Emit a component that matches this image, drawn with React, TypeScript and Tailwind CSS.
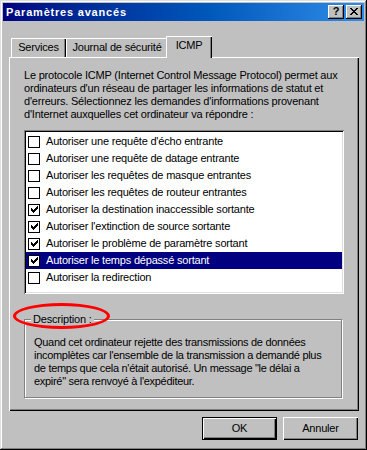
import React from "react";

const items: { label: string; checked: boolean; selected?: boolean }[] = [
  { label: "Autoriser une requête d'écho entrante", checked: false },
  { label: "Autoriser une requête de datage entrante", checked: false },
  { label: "Autoriser les requêtes de masque entrantes", checked: false },
  { label: "Autoriser les requêtes de routeur entrantes", checked: false },
  { label: "Autoriser la destination inaccessible sortante", checked: true },
  { label: "Autoriser l'extinction de source sortante", checked: true },
  { label: "Autoriser le problème de paramètre sortant", checked: true },
  { label: "Autoriser le temps dépassé sortant", checked: true, selected: true },
  { label: "Autoriser la redirection", checked: false },
];

function Check() {
  return (
    <svg width="7" height="7" viewBox="0 0 7 7" shapeRendering="crispEdges">
      <path
        d="M0 2h1v3H0z M1 3h1v3H1z M2 4h1v3H2z M3 3h1v3H3z M4 2h1v3H4z M5 1h1v3H5z M6 0h1v3H6z"
        fill="#000"
      />
    </svg>
  );
}

function CloseGlyph() {
  return (
    <svg width="8" height="7" viewBox="0 0 8 7" shapeRendering="crispEdges">
      <path
        d="M0 0h2v1H0z M6 0h2v1H6z M1 1h2v1H1z M5 1h2v1H5z M2 2h4v1H2z M3 3h2v1H3z M2 4h4v1H2z M1 5h2v1H1z M5 5h2v1H5z M0 6h2v1H0z M6 6h2v1H6z"
        fill="#000"
      />
    </svg>
  );
}

export default function App() {
  return (
    <div className="relative w-[367px] h-[450px] bg-[#c0c0c0] p-[3px] flex flex-col font-['Liberation_Sans',Arial,sans-serif] text-[11px] leading-[13px] text-black tracking-[-0.2px] shadow-[inset_-1px_-1px_#000,inset_1px_1px_#dfdfdf,inset_-2px_-2px_#808080,inset_2px_2px_#fff]">
      {/* Title bar */}
      <div className="h-[18px] flex items-center bg-linear-to-r from-[#000080] to-[#2e8de8] pl-[3px] pr-[2px]">
        <span className="flex-1 text-white font-bold text-[11px] tracking-[0.8px] whitespace-nowrap">
          Paramètres avancés
        </span>
        <div className="flex gap-[2px]">
          <div className="w-[16px] h-[14px] bg-[#c0c0c0] flex items-center justify-center shadow-[inset_-1px_-1px_#000,inset_1px_1px_#fff,inset_-2px_-2px_#808080] text-[11px] font-bold leading-[11px] tracking-normal pb-[1px]">
            ?
          </div>
          <div className="w-[16px] h-[14px] bg-[#c0c0c0] flex items-center justify-center shadow-[inset_-1px_-1px_#000,inset_1px_1px_#fff,inset_-2px_-2px_#808080] pb-[1px]">
            <CloseGlyph />
          </div>
        </div>
      </div>

      {/* Body */}
      <div className="flex-1 flex flex-col pl-[6px] pr-[5px]">
        {/* Tabs */}
        <div className="relative z-10 mt-[15px] h-[21px] flex items-end pl-[2px]">
          <div className="w-[55px] h-[19px] flex justify-center pt-[3px] bg-[#c0c0c0] whitespace-nowrap shadow-[inset_1px_1px_#fff,inset_-1px_0_#000,inset_-2px_0_#808080]">
            Services
          </div>
          <div className="w-[102px] h-[19px] flex justify-center pt-[3px] bg-[#c0c0c0] whitespace-nowrap shadow-[inset_1px_1px_#fff,inset_-1px_0_#000,inset_-2px_0_#808080]">
            Journal de sécurité
          </div>
          <div className="relative -ml-[2px] -mb-px w-[46px] h-[22px] flex justify-center pt-[3px] bg-[#c0c0c0] whitespace-nowrap shadow-[inset_1px_1px_#fff,inset_-1px_0_#000,inset_-2px_0_#808080]">
            ICMP
          </div>
        </div>

        {/* Panel */}
        <div className="h-[354px] flex flex-col pt-[12px] pl-[15px] bg-[#c0c0c0] shadow-[inset_1px_1px_#fff,inset_-1px_-1px_#000,inset_-2px_-2px_#808080]">
          <div className="whitespace-nowrap">
            <div>Le protocole ICMP (Internet Control Message Protocol) permet aux</div>
            <div>ordinateurs d'un réseau de partager les informations de statut et</div>
            <div>d'erreurs. Sélectionnez les demandes d'informations provenant</div>
            <div>d'Internet auxquelles cet ordinateur va répondre :</div>
          </div>

          {/* List box */}
          <div className="mt-[9px] w-[320px] h-[164px] bg-white p-[2px] shadow-[inset_1px_1px_#808080,inset_-1px_-1px_#fff,inset_2px_2px_#000,inset_-2px_-2px_#dfdfdf]">
            <div className="pt-[1px] flex flex-col">
              {items.map((it) => (
                <div
                  key={it.label}
                  className={
                    "h-[17px] flex items-center whitespace-nowrap " +
                    (it.selected ? "bg-[#000080] text-white" : "")
                  }
                >
                  <div className="ml-[2px] w-[12px] h-[12px] border border-black bg-white flex items-center justify-center">
                    {it.checked && <Check />}
                  </div>
                  <span className="ml-[6px]">{it.label}</span>
                </div>
              ))}
            </div>
          </div>

          {/* Description group */}
          <fieldset className="mt-[19px] w-[318px] h-[85px] p-0 m-0 border border-[#808080] shadow-[1px_1px_#fff,inset_1px_1px_#fff]">
            <legend className="ml-[6px] px-[2px] bg-[#c0c0c0] leading-[13px]">Description :</legend>
            <div className="pt-[10px] pl-[9px] whitespace-nowrap tracking-[-0.3px]">
              <div>Quand cet ordinateur rejette des transmissions de données</div>
              <div>incomplètes car l'ensemble de la transmission a demandé plus</div>
              <div>de temps que cela n'était autorisé. Un message "le délai a</div>
              <div>expiré" sera renvoyé à l'expéditeur.</div>
            </div>
          </fieldset>
        </div>

        {/* Buttons */}
        <div className="mt-[6px] flex justify-end gap-[6px] pr-[1px]">
          <button className="w-[75px] h-[23px] bg-[#c0c0c0] border border-black flex items-center justify-center shadow-[inset_1px_1px_#fff,inset_-1px_-1px_#000,inset_-2px_-2px_#808080]">
            OK
          </button>
          <button className="w-[75px] h-[23px] bg-[#c0c0c0] flex items-center justify-center shadow-[inset_1px_1px_#fff,inset_-1px_-1px_#000,inset_-2px_-2px_#808080]">
            Annuler
          </button>
        </div>
      </div>

      {/* Red annotation ellipse */}
      <div className="absolute left-[13px] top-[303px] w-[97px] h-[26px] rounded-[50%] border-[3px] border-[#ff0000] pointer-events-none" />
    </div>
  );
}
